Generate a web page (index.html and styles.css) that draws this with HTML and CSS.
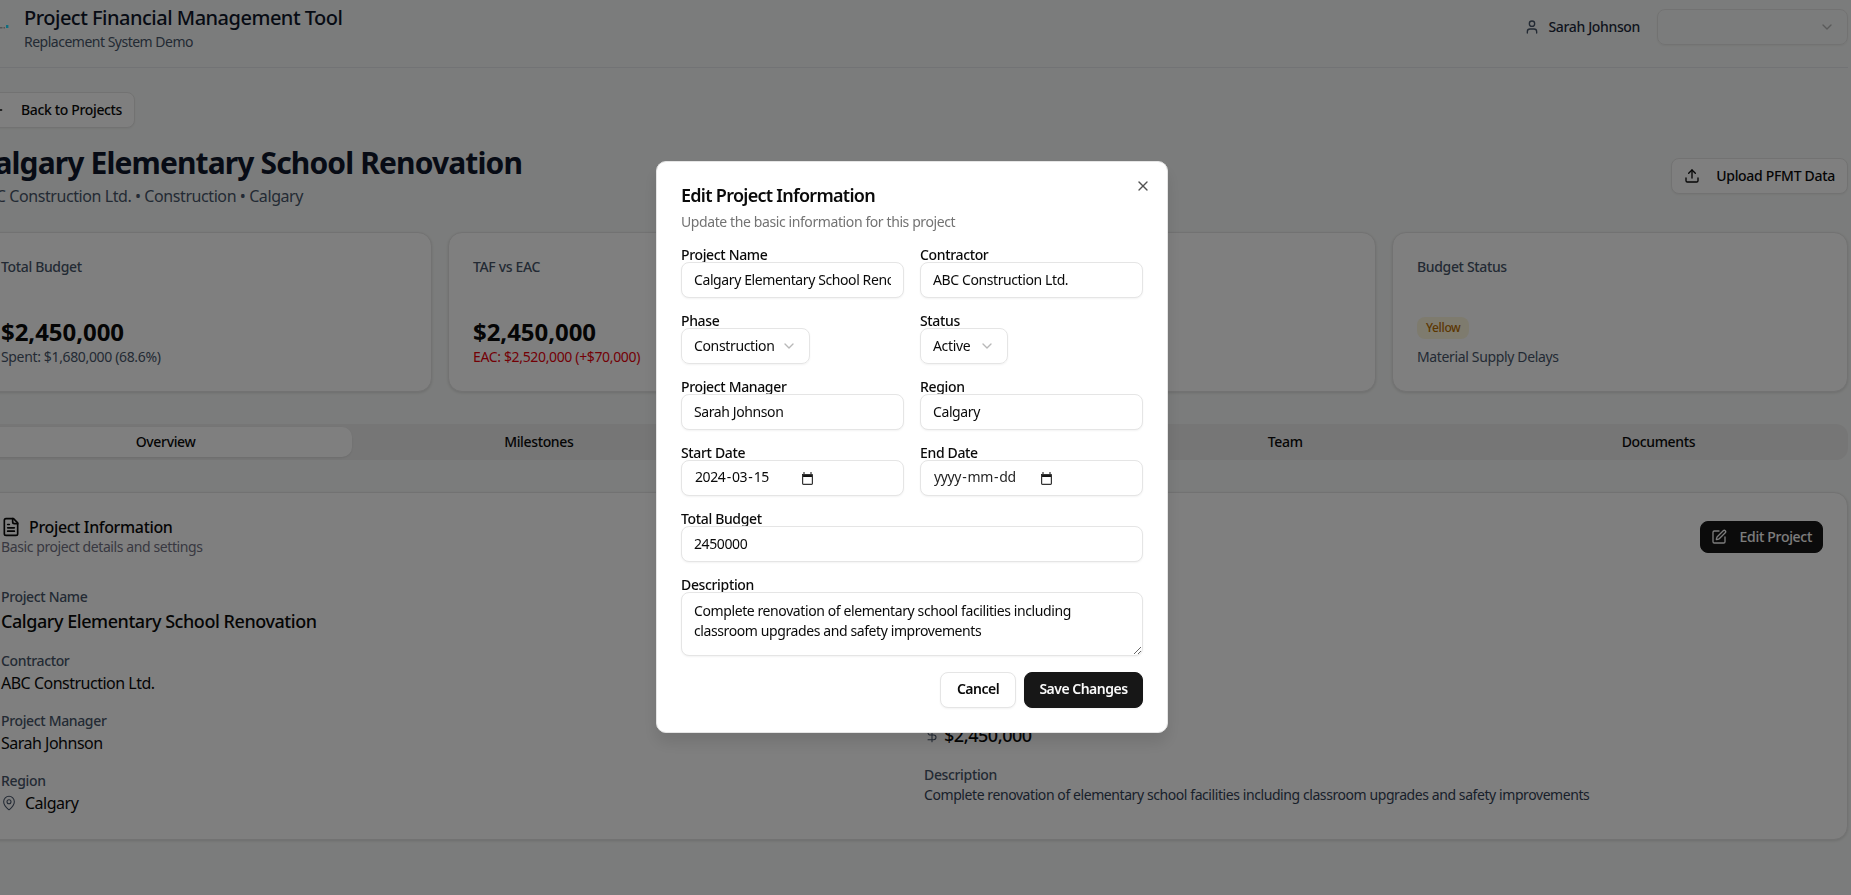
FILE: index.html
```html
<!DOCTYPE html>
<html lang="en">
<head>
<meta charset="utf-8">
<title>Project Financial Management Tool</title>
<link rel="stylesheet" href="styles.css">
</head>
<body>
<svg class="defs" width="0" height="0" aria-hidden="true">
  <symbol id="i-chevron" viewBox="0 0 24 24"><path d="m6 9 6 6 6-6"/></symbol>
  <symbol id="i-cal" viewBox="0 0 11 13"><path class="cal-fill" d="M1.5 0h1v2h6V0h1v2h1v3H0V2h1.5z"/><rect class="cal-line" x=".6" y="2.6" width="9.8" height="9.8" rx=".8"/></symbol>
</svg>
<div class="page">
  <header class="topbar">
    <div class="brand">
      <svg class="logo" viewBox="0 0 48 10"><rect x="24" y="5" width="2.5" height="1.5" fill="#a8a8a8"/><rect x="27.5" y="5" width="1.5" height="1.5" fill="#a8a8a8"/><rect x="30" y="3" width="2.4" height="3" fill="#20dcff"/></svg>
      <div>
        <div class="brand-title">Project Financial Management Tool</div>
        <div class="brand-sub">Replacement System Demo</div>
      </div>
    </div>
    <div class="top-right">
      <svg class="ico user-ico" viewBox="0 0 24 24"><path d="M19 21v-2a4 4 0 0 0-4-4H9a4 4 0 0 0-4 4v2"/><circle cx="12" cy="7" r="4"/></svg>
      <span class="user-name">Sarah Johnson</span>
      <div class="top-select"><svg class="ico chev"><use href="#i-chevron"/></svg></div>
    </div>
  </header>

  <main class="main">
    <button class="btn back-btn"><svg class="ico" viewBox="0 0 24 24"><path d="m12 19-7-7 7-7"/><path d="M19 12H5"/></svg>Back to Projects</button>

    <div class="title-row">
      <div>
        <h1>Calgary Elementary School Renovation</h1>
        <p class="title-sub">ABC Construction Ltd. • Construction • Calgary</p>
      </div>
      <button class="btn upload-btn"><svg class="ico" viewBox="0 0 24 24"><path d="M21 15v4a2 2 0 0 1-2 2H5a2 2 0 0 1-2-2v-4"/><path d="M17 8l-5-5-5 5"/><path d="M12 3v12"/></svg>Upload PFMT Data</button>
    </div>

    <section class="stats">
      <div class="stat">
        <div class="stat-label">Total Budget</div>
        <div class="stat-foot"><div class="stat-value">$2,450,000</div><div class="stat-note">Spent: $1,680,000 (68.6%)</div></div>
      </div>
      <div class="stat">
        <div class="stat-label">TAF vs EAC</div>
        <div class="stat-foot"><div class="stat-value">$2,450,000</div><div class="stat-note red">EAC: $2,520,000 (+$70,000)</div></div>
      </div>
      <div class="stat"></div>
      <div class="stat">
        <div class="stat-label">Budget Status</div>
        <div class="stat-foot"><span class="badge">Yellow</span><div class="stat-note badge-note">Material Supply Delays</div></div>
      </div>
    </section>

    <nav class="tabs">
      <div class="tab active">Overview</div>
      <div class="tab">Milestones</div>
      <div class="tab">Financial</div>
      <div class="tab">Team</div>
      <div class="tab">Documents</div>
    </nav>

    <section class="info">
      <div class="info-head">
        <div>
          <div class="info-title"><svg class="ico file-ico" viewBox="0 0 24 24"><path d="M15 2H6a2 2 0 0 0-2 2v16a2 2 0 0 0 2 2h12a2 2 0 0 0 2-2V7Z"/><path d="M14 2v4a2 2 0 0 0 2 2h4"/><path d="M10 9H8"/><path d="M16 13H8"/><path d="M16 17H8"/></svg>Project Information</div>
          <div class="info-sub">Basic project details and settings</div>
        </div>
        <button class="btn edit-btn"><svg class="ico" viewBox="0 0 24 24"><path d="M12 3H5a2 2 0 0 0-2 2v14a2 2 0 0 0 2 2h14a2 2 0 0 0 2-2v-7"/><path d="M18.375 2.625a1 1 0 0 1 3 3l-9.013 9.014a2 2 0 0 1-.853.505l-2.873.84a.5.5 0 0 1-.62-.62l.84-2.873a2 2 0 0 1 .506-.852z"/></svg>Edit Project</button>
      </div>
      <div class="info-grid">
        <div class="col">
          <div class="item"><div class="k">Project Name</div><div class="v big">Calgary Elementary School Renovation</div></div>
          <div class="item"><div class="k">Contractor</div><div class="v">ABC Construction Ltd.</div></div>
          <div class="item"><div class="k">Project Manager</div><div class="v">Sarah Johnson</div></div>
          <div class="item"><div class="k">Region</div><div class="v with-ico"><svg class="ico pin-ico" viewBox="0 0 24 24"><path d="M20 10c0 4.993-5.539 10.193-7.399 11.799a1 1 0 0 1-1.202 0C9.539 20.193 4 14.993 4 10a8 8 0 0 1 16 0"/><circle cx="12" cy="10" r="3"/></svg>Calgary</div></div>
        </div>
        <div class="col">
          <div class="item"><div class="k">Phase</div><div class="v">Construction</div></div>
          <div class="item"><div class="k">Status</div><div class="v short">Active</div></div>
          <div class="item"><div class="k">Total Budget</div><div class="v big with-ico tight"><svg class="ico pin-ico" viewBox="0 0 24 24"><path d="M12 2v20"/><path d="M17 5H9.5a3.5 3.5 0 0 0 0 7h5a3.5 3.5 0 0 1 0 7H6"/></svg>$2,450,000</div></div>
          <div class="item"><div class="k">Description</div><div class="v small">Complete renovation of elementary school facilities including classroom upgrades and safety improvements</div></div>
        </div>
      </div>
    </section>
  </main>
</div>

<div class="overlay">
  <div class="modal" role="dialog" aria-label="Edit Project Information">
    <button class="close" aria-label="Close"><svg class="ico" viewBox="0 0 24 24"><path d="M18 6 6 18"/><path d="m6 6 12 12"/></svg></button>
    <h2>Edit Project Information</h2>
    <p class="modal-sub">Update the basic information for this project</p>
    <form class="form">
      <div class="two">
        <div class="fld"><label>Project Name</label><input class="input" type="text" value="Calgary Elementary School Renovation" readonly></div>
        <div class="fld"><label>Contractor</label><input class="input" type="text" value="ABC Construction Ltd." readonly></div>
      </div>
      <div class="two">
        <div class="fld"><label>Phase</label><div class="select phase">Construction<svg class="ico chev"><use href="#i-chevron"/></svg></div></div>
        <div class="fld"><label>Status</label><div class="select status">Active<svg class="ico chev"><use href="#i-chevron"/></svg></div></div>
      </div>
      <div class="two">
        <div class="fld"><label>Project Manager</label><input class="input" type="text" value="Sarah Johnson" readonly></div>
        <div class="fld"><label>Region</label><input class="input" type="text" value="Calgary" readonly></div>
      </div>
      <div class="two">
        <div class="fld"><label>Start Date</label><div class="input date"><span class="date-text">2024<i>-</i>03<i>-</i>15</span><svg class="cal"><use href="#i-cal"/></svg></div></div>
        <div class="fld"><label>End Date</label><div class="input date"><span class="date-text empty">yyyy<i>-</i>mm<i>-</i>dd</span><svg class="cal"><use href="#i-cal"/></svg></div></div>
      </div>
      <div class="fld"><label>Total Budget</label><input class="input" type="text" value="2450000" readonly></div>
      <div class="fld"><label>Description</label><textarea class="input area" readonly>Complete renovation of elementary school facilities including classroom upgrades and safety improvements</textarea></div>
      <div class="actions">
        <button type="button" class="mbtn cancel">Cancel</button>
        <button type="button" class="mbtn save">Save Changes</button>
      </div>
    </form>
  </div>
</div>
</body>
</html>
```

FILE: styles.css
```css
* { box-sizing: border-box; }
html, body { margin: 0; height: 895px; overflow: hidden; }
body {
  background: #f7f9f8;
  color: #0a0a0a;
  font-family: "Noto Sans", "Open Sans", sans-serif;
  font-size: 14px;
  line-height: 20px;
  letter-spacing: -0.35px;
}
button, input, textarea { font: inherit; letter-spacing: inherit; color: inherit; }
.defs { position: absolute; }
.ico { width: 16px; height: 16px; fill: none; stroke: currentColor; stroke-width: 2; stroke-linecap: round; stroke-linejoin: round; flex: none; }

.page { width: 1872px; margin-left: -24px; }

.topbar { height: 68px; border-bottom: 1px solid #e5e7eb; display: flex; justify-content: space-between; padding-top: 4px; }
.brand { display: flex; gap: 0; }
.logo { width: 48px; height: 10px; margin-top: 18px; }
.brand-title { font-size: 20px; line-height: 28px; font-weight: 500; color: #0f172a; letter-spacing: -0.5px; }
.brand-sub { color: #475569; letter-spacing: -0.5px; }
.top-right { display: flex; align-items: center; height: 44px; margin-top: 1px; }
.user-ico { color: #475569; margin-right: 8px; }
.user-name { font-weight: 500; color: #1e293b; margin-right: 17px; }
.top-select { width: 191px; height: 36px; border: 1px solid #e5e5e5; border-radius: 8px; display: flex; align-items: center; justify-content: flex-end; padding-right: 12px; box-shadow: 0 1px 2px rgba(0,0,0,.05); }
.chev { color: #737373; opacity: .5; }

.main { padding-top: 24px; }
.btn { display: inline-flex; align-items: center; gap: 16px; height: 36px; padding: 0 12px; border: 1px solid #e5e5e5; border-radius: 8px; background: #fff; font-weight: 500; box-shadow: 0 1px 2px rgba(0,0,0,.05); }
.back-btn { display: flex; margin-bottom: 16px; }
.upload-btn { letter-spacing: -0.3px; }

.title-row { display: flex; justify-content: space-between; align-items: center; }
h1 { margin: 0; padding-top: 1px; font-size: 30px; line-height: 36px; font-weight: 700; color: #0f172a; letter-spacing: -0.87px; }
.title-sub { margin: 3px 0 0; font-size: 16px; line-height: 24px; color: #475569; letter-spacing: -0.42px; }

.stats { display: grid; grid-template-columns: repeat(4, 1fr); gap: 16px; margin-top: 24px; }
.stat { height: 160px; padding: 24px; background: #fff; border: 1px solid #e5e5e5; border-radius: 14px; display: flex; flex-direction: column; justify-content: space-between; box-shadow: 0 1px 3px rgba(0,0,0,.12); }
.stat-label { font-weight: 500; color: #475569; }
.stat-value { font-size: 24px; line-height: 32px; margin-bottom: -1px; font-weight: 700; color: #0a0a0a; letter-spacing: -0.05px; }
.stat-note { color: #475569; }
.stat-note.red { color: #e7000b; }
.stat-foot { display: flex; flex-direction: column; align-items: flex-start; }
.badge { height: 22px; padding: 0 9px; border-radius: 8px; background: #fcf6dd; color: #b86e00; font-size: 12px; font-weight: 500; line-height: 22px; }
.badge-note { margin-top: 8px; }

.tabs { display: grid; grid-template-columns: repeat(5, 1fr); height: 36px; padding: 3px; margin-top: 32px; background: #ececec; border-radius: 12px; }
.tab { display: flex; align-items: center; justify-content: center; font-weight: 500; border-radius: 10px; }
.tab.active { background: #fff; box-shadow: 0 1px 2px rgba(0,0,0,.08); }

.info { height: 348px; margin-top: 32px; padding: 24px; background: #fff; border: 1px solid #e5e5e5; border-radius: 14px; box-shadow: 0 1px 3px rgba(0,0,0,.12); }
.info-head { display: flex; justify-content: space-between; align-items: center; }
.info-title { display: flex; align-items: center; gap: 8px; font-size: 16px; font-weight: 500; }
.file-ico { width: 20px; height: 20px; margin-top: 0; }
.info-sub { color: #717182; letter-spacing: -0.4px; }
.edit-btn { height: 32px; padding: 0 10px; gap: 13px; letter-spacing: -0.3px; background: #171717; border-color: #171717; color: #fafafa; box-shadow: none; }

.info-grid { display: grid; grid-template-columns: 1fr 1fr; gap: 24px; margin-top: 30px; }
.col { display: flex; flex-direction: column; gap: 16px; }
.k { color: #475569; font-weight: 500; }
.v { font-size: 16px; line-height: 24px; letter-spacing: -0.5px; }
.v.big { font-size: 18px; line-height: 28px; font-weight: 500; letter-spacing: -0.45px; }
.v.short { line-height: 18px; font-size: 12px; }
.v.small { font-size: 14px; line-height: 20px; color: #334155; letter-spacing: -0.42px; }
.with-ico { display: flex; align-items: center; gap: 8px; }
.with-ico.tight { gap: 4px; }
.pin-ico { color: #475569; stroke-width: 1.6; }

.overlay { position: fixed; inset: 0; background: rgba(0,0,0,.5); }
.modal { position: absolute; left: 656px; top: 161px; width: 512px; height: 572px; padding: 24px; background: #fff; border: 1px solid #e5e5e5; border-radius: 10px; box-shadow: 0 10px 15px rgba(0,0,0,.1); color: #0a0a0a; }
.close { position: absolute; top: 16px; right: 16px; width: 16px; height: 16px; padding: 0; border: 0; background: none; opacity: .7; display: flex; }
h2 { margin: 0; font-size: 18px; line-height: 18px; font-weight: 600; letter-spacing: -0.72px; }
.modal-sub { margin: 8px 0 0; color: #737373; letter-spacing: -0.4px; }
.form { display: flex; flex-direction: column; gap: 16px; margin-top: 16px; }
.two { display: grid; grid-template-columns: 1fr 1fr; gap: 16px; }
.fld { display: flex; flex-direction: column; align-items: flex-start; min-width: 0; }
label { font-weight: 500; line-height: 14px; }
.input { width: 100%; height: 36px; padding: 0 12px 2px; border: 1px solid #e5e5e5; border-radius: 8px; background: #fff; outline: none; box-shadow: 0 1px 2px rgba(0,0,0,.05); letter-spacing: -0.4px; }
.area { height: 64px; padding: 8px 12px; line-height: 20px; resize: vertical; display: block; }
.select { display: flex; align-items: center; justify-content: space-between; height: 36px; padding: 0 12px; border: 1px solid #e5e5e5; border-radius: 8px; box-shadow: 0 1px 2px rgba(0,0,0,.05); }
.select.phase { width: 129px; }
.select.status { width: 88px; }
.date { display: flex; align-items: center; padding: 0 0 0 13px; }
.date-text { width: 107px; flex: none; margin-bottom: 2px; }
.date-text i { font-style: normal; margin: 0 1.2px; }
.date-text.empty { color: #262626; }
.cal { width: 11px; height: 13px; }
.cal-fill { fill: #111; }
.cal-line { fill: none; stroke: #333; stroke-width: 1.2; }
.actions { display: flex; justify-content: flex-end; gap: 8px; }
.mbtn { height: 36px; padding: 0 0 2px; border-radius: 8px; font-weight: 600; letter-spacing: -0.5px; border: 1px solid #e5e5e5; background: #fff; box-shadow: 0 1px 2px rgba(0,0,0,.05); }
.cancel { width: 76px; }
.save { width: 119px; background: #171717; border-color: #171717; color: #fafafa; }
```
